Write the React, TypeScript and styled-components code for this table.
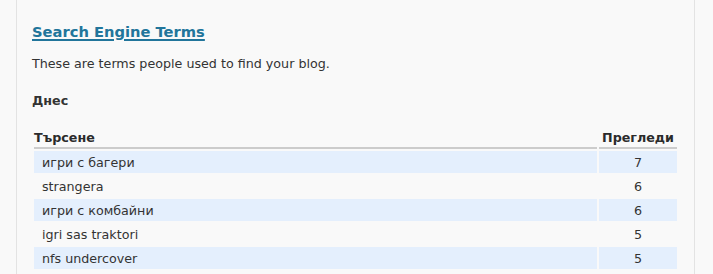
import React from "react";
import styled, { createGlobalStyle } from "styled-components";

const GlobalStyle = createGlobalStyle`
  html, body {
    margin: 0;
    padding: 0;
    background: #f9f9f9;
  }
  body {
    font-family: "DejaVu Sans", Verdana, sans-serif;
    color: #333;
  }
`;

const Page = styled.div`
  display: flex;
  height: 274px;
  padding-left: 16px;
  padding-right: 18px;
`;

const Panel = styled.div`
  flex: 1;
  border-left: 1px solid #e3e3e3;
  border-right: 1px solid #e3e3e3;
  padding: 22px 15px 0 15px;
`;

const Title = styled.a`
  display: inline-block;
  font-size: 14.7px;
  font-weight: bold;
  color: #21759b;
  text-decoration: underline;
  text-decoration-thickness: 2px;
  text-underline-offset: 2px;
`;

const Intro = styled.p`
  margin: 15px 0 0;
  font-size: 12.7px;
`;

const Day = styled.h4`
  margin: 22px 0 0;
  font-size: 12.7px;
  font-weight: bold;
`;

const Table = styled.table`
  width: 100%;
  margin-top: 20px;
  border-spacing: 2px;
  font-size: 12.7px;
`;

const Head = styled.th<{ $num?: boolean }>`
  text-align: ${(p) => (p.$num ? "center" : "left")};
  font-weight: bold;
  color: #2b2b2b;
  padding: 0 0 2px;
  border-bottom: 2px solid #ccc;
  width: ${(p) => (p.$num ? "78px" : "auto")};
`;

const Row = styled.tr<{ $alt: boolean }>`
  background: ${(p) => (p.$alt ? "#e4effd" : "transparent")};
`;

const Cell = styled.td<{ $num?: boolean }>`
  height: 22px;
  padding: 0 8px;
  text-align: ${(p) => (p.$num ? "center" : "left")};
`;

const terms: [string, number][] = [
  ["игри с багери", 7],
  ["strangera", 6],
  ["игри с комбайни", 6],
  ["igri sas traktori", 5],
  ["nfs undercover", 5],
];

export default function App() {
  return (
    <>
      <GlobalStyle />
      <Page>
        <Panel>
          <Title>Search Engine Terms</Title>
          <Intro>These are terms people used to find your blog.</Intro>
          <Day>Днес</Day>
          <Table>
            <thead>
              <tr>
                <Head>Търсене</Head>
                <Head $num>Прегледи</Head>
              </tr>
            </thead>
            <tbody>
              {terms.map(([term, views], i) => (
                <Row key={term} $alt={i % 2 === 0}>
                  <Cell>{term}</Cell>
                  <Cell $num>{views}</Cell>
                </Row>
              ))}
            </tbody>
          </Table>
        </Panel>
      </Page>
    </>
  );
}
